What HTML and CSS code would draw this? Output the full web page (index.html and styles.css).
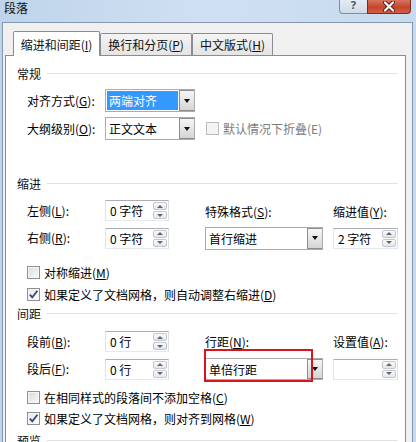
FILE: index.html
```html
<!DOCTYPE html>
<html lang="zh-CN">
<head>
<meta charset="utf-8">
<title>段落</title>
<link rel="stylesheet" href="styles.css">
</head>
<body>
<div class="window">
  <div class="titlebar">
    <span class="title">段落</span>
    <div class="caption">
      <div class="btn-help">?</div>
      <div class="btn-close">
        <svg width="14" height="11" viewBox="0 0 14 11">
          <path d="M3 1.5 L11 9.5 M11 1.5 L3 9.5" stroke="#5a1e16" stroke-width="4" stroke-linecap="round"/>
          <path d="M3 1.5 L11 9.5 M11 1.5 L3 9.5" stroke="#ffffff" stroke-width="2.2" stroke-linecap="round"/>
        </svg>
      </div>
    </div>
  </div>
  <div class="dlg">
    <div class="tabs">
      <div class="tab active t1">缩进和间距(<u>I</u>)</div>
      <div class="tab t2">换行和分页(<u>P</u>)</div>
      <div class="tab t3">中文版式(<u>H</u>)</div>
    </div>
    <div class="panel">
      <div class="head">常规</div>
      <div class="rows grid-general">
        <span class="lbl">对齐方式(<u>G</u>):</span>
        <div class="sel"><span class="val hl">两端对齐</span><span class="arr"></span></div>
        <span></span>
        <span class="lbl">大纲级别(<u>O</u>):</span>
        <div class="sel"><span class="val">正文文本</span><span class="arr"></span></div>
        <div class="cb-row disabled"><span class="cb"></span><span>默认情况下折叠(E)</span></div>
      </div>

      <div class="head head-indent">缩进</div>
      <div class="rows grid4 grid-indent">
        <span class="lbl">左侧(<u>L</u>):</span>
        <div class="spin"><span class="txt">0 字符</span><span class="btns"><span class="up"></span><span class="down"></span></span></div>
        <span class="lbl lbl-low">特殊格式(<u>S</u>):</span>
        <span class="lbl lbl-low">缩进值(<u>Y</u>):</span>
        <span class="lbl">右侧(<u>R</u>):</span>
        <div class="spin"><span class="txt">0 字符</span><span class="btns"><span class="up"></span><span class="down"></span></span></div>
        <div class="sel wide"><span class="val">首行缩进</span><span class="arr"></span></div>
        <div class="spin spin-r"><span class="txt">2 字符</span><span class="btns"><span class="up"></span><span class="down"></span></span></div>
      </div>
      <div class="rows cb-row cb-first"><span class="cb"></span><span>对称缩进(<u>M</u>)</span></div>
      <div class="rows cb-row cb-next"><span class="cb checked"><svg width="11" height="11" viewBox="0 0 11 11"><path d="M1.8 5.6 L4.3 8.4 L9.4 1.8" fill="none" stroke="#34497a" stroke-width="1.8"/></svg></span><span>如果定义了文档网格，则自动调整右缩进(<u>D</u>)</span></div>

      <div class="head head-spacing">间距</div>
      <div class="rows grid4 grid-spacing">
        <span class="lbl">段前(<u>B</u>):</span>
        <div class="spin"><span class="txt">0 行</span><span class="btns"><span class="up"></span><span class="down"></span></span></div>
        <span class="lbl">行距(<u>N</u>):</span>
        <span class="lbl">设置值(<u>A</u>):</span>
        <span class="lbl">段后(<u>F</u>):</span>
        <div class="spin"><span class="txt">0 行</span><span class="btns"><span class="up"></span><span class="down"></span></span></div>
        <div class="mark-wrap">
          <div class="sel wide sel-sp"><span class="val">单倍行距</span><span class="arr"></span></div>
          <div class="redbox"></div>
        </div>
        <div class="spin spin-r spin-empty"><span class="txt"></span><span class="btns"><span class="up"></span><span class="down"></span></span></div>
      </div>
      <div class="rows cb-row cb-third"><span class="cb"></span><span>在相同样式的段落间不添加空格(<u>C</u>)</span></div>
      <div class="rows cb-row cb-last"><span class="cb checked"><svg width="11" height="11" viewBox="0 0 11 11"><path d="M1.8 5.6 L4.3 8.4 L9.4 1.8" fill="none" stroke="#34497a" stroke-width="1.8"/></svg></span><span>如果定义了文档网格，则对齐到网格(<u>W</u>)</span></div>

      <div class="head head-preview">预览</div>
    </div>
  </div>
</div>
</body>
</html>
```
FILE: styles.css
```css
* { box-sizing: border-box; }
html, body { margin: 0; padding: 0; }
body {
  width: 416px;
  height: 442px;
  overflow: hidden;
  font-family: "Noto Sans CJK SC", "Microsoft YaHei", sans-serif;
  font-size: 12px;
  color: #000;
}
u { text-decoration: underline; text-underline-offset: 1px; }

.window {
  width: 416px;
  height: 442px;
  padding: 0 3px 0 2px;
  display: flex;
  flex-direction: column;
  background: linear-gradient(to right, #bfd4ea 0%, #cfe0f2 50%, #c7daee 100%);
}

.titlebar {
  height: 22px;
  flex: none;
  display: flex;
  align-items: flex-start;
}
.title {
  padding-left: 2px;
  line-height: 16px;
  color: #111;
}
.caption {
  margin-left: auto;
  margin-right: 2px;
  display: flex;
}
.btn-help {
  width: 28px;
  height: 14px;
  border: 1px solid #7d8ea4;
  border-top: none;
  border-right: none;
  border-bottom-left-radius: 4px;
  background: linear-gradient(#e3ebf4, #cfdbe8);
  color: #55606e;
  font-weight: bold;
  font-family: "DejaVu Sans", sans-serif;
  font-size: 11px;
  line-height: 12px;
  text-align: center;
  text-shadow: 0 0 2px #fff;
}
.btn-close {
  width: 44px;
  height: 14px;
  border: 1px solid #7a2b20;
  border-top: none;
  border-bottom-right-radius: 4px;
  background: linear-gradient(#d87561 0%, #c5442c 55%, #d35f45 100%);
  display: flex;
  align-items: center;
  justify-content: center;
}

.dlg {
  flex: 1;
  background: #f0f0f0;
  border: 1px solid #8597ae;
  border-bottom: none;
  display: flex;
  flex-direction: column;
  min-height: 0;
}

.tabs {
  height: 32px;
  flex: none;
  display: flex;
  align-items: flex-end;
  padding-left: 10px;
}
.tab {
  height: 22px;
  border: 1px solid #898c95;
  border-bottom: none;
  border-radius: 2px 2px 0 0;
  background: linear-gradient(#f4f4f4, #e4e4e4);
  display: flex;
  align-items: center;
  justify-content: center;
  color: #111;
}
.tab.active {
  height: 25px;
  margin-bottom: -1px;
  background: #fff;
  position: relative;
  z-index: 1;
}
.t1 { width: 87px; }
.t2 { width: 92px; }
.t3 { width: 81px; }

.panel {
  flex: 1;
  margin: 0 6px 0 2px;
  border: 1px solid #898c95;
  background: #fff;
  padding: 9px 7px 0 11px;
}

.head {
  display: flex;
  align-items: center;
  height: 16px;
  color: #111;
}
.head::after {
  content: "";
  flex: 1;
  border-top: 1px solid #e2e2e2;
  margin-left: 6px;
}
.head-indent { margin-top: 35px; }
.head-spacing { margin-top: 3px; }
.head-preview { margin-top: 6px; }

.rows { padding-left: 10px; }
.lbl { line-height: 16px; white-space: nowrap; }

.grid-general {
  display: grid;
  grid-template-columns: 78px 100px auto;
  grid-auto-rows: 23px;
  row-gap: 5px;
  margin-top: 8px;
  align-items: center;
}
.grid4 {
  display: grid;
  grid-template-columns: 78px 100px 128px 65px;
  grid-template-rows: 21px 22px;
  row-gap: 6px;
  align-items: center;
}
.grid-indent { margin-top: 9px; }
.grid-spacing { margin-top: 10px; }
.lbl-low { position: relative; top: 1px; }

.sel {
  width: 90px;
  height: 23px;
  border: 1px solid #acacac;
  background: #fff;
  display: flex;
  padding: 1px 0 1px 1px;
}
.sel.wide { width: 118px; }
.sel .val {
  flex: 1;
  display: flex;
  align-items: center;
  padding-left: 2px;
  white-space: nowrap;
}
.sel .val.hl {
  background: #3399ff;
  color: #fff;
  margin-right: 1px;
}
.sel .arr {
  width: 15px;
  margin-top: -1px;
  margin-bottom: -1px;
  border: 1px solid #8d8d8d;
  border-right: none;
  background: linear-gradient(#f6f6f6, #d5d5d5);
  display: flex;
  align-items: center;
  justify-content: center;
}
.sel .arr::before {
  content: "";
  border-left: 3.5px solid transparent;
  border-right: 3.5px solid transparent;
  border-top: 4px solid #111;
}

.spin {
  width: 64px;
  height: 21px;
  border: 1px solid #abadb3;
  border-color: #abadb3 #dbdfe6 #e3e9ef #e2e3ea;
  background: #fff;
  display: flex;
  align-items: center;
  padding: 1px 1px 1px 4px;
}
.spin-r { width: 65px; }
.spin .txt { flex: 1; white-space: nowrap; }
.spin .btns {
  width: 14px;
  align-self: stretch;
  display: flex;
  flex-direction: column;
  gap: 1px;
}
.spin .btns span {
  flex: 1;
  border: 1px solid #c3c6cc;
  border-radius: 2px;
  background: linear-gradient(#fbfbfb, #e3e6ea);
  display: flex;
  align-items: center;
  justify-content: center;
}
.spin .up::before {
  content: "";
  border-left: 3px solid transparent;
  border-right: 3px solid transparent;
  border-bottom: 3px solid #5d6677;
}
.spin .down::before {
  content: "";
  border-left: 3px solid transparent;
  border-right: 3px solid transparent;
  border-top: 3px solid #5d6677;
}

.mark-wrap { position: relative; width: 118px; height: 22px; }
.sel-sp { height: 22px; }
.redbox {
  position: absolute;
  left: -1px;
  top: -9px;
  width: 109px;
  height: 33px;
  border: 2px solid #d9161d;
}

.cb-row {
  display: flex;
  align-items: center;
  height: 16px;
  gap: 4px;
  white-space: nowrap;
}
.cb {
  width: 13px;
  height: 13px;
  flex: none;
  border: 1px solid #8e8f8f;
  background: linear-gradient(135deg, #d9dadb, #fbfbfb);
  box-shadow: inset 0 0 0 1px #f6f6f6;
  display: flex;
  align-items: center;
  justify-content: center;
}
.cb.checked {
  background: linear-gradient(135deg, #e6e7e8, #fdfdfd);
}
.cb svg { display: block; }
.cb-row.disabled { color: #7c7c7c; padding-left: 1px; }
.cb-row.disabled .cb {
  border-color: #bcbcbc;
  background: #f4f4f4;
  box-shadow: none;
}
.cb-first { margin-top: 15px; }
.cb-next { margin-top: 6px; }
.cb-third { margin-top: 9px; }
.cb-last { margin-top: 5px; }
```
